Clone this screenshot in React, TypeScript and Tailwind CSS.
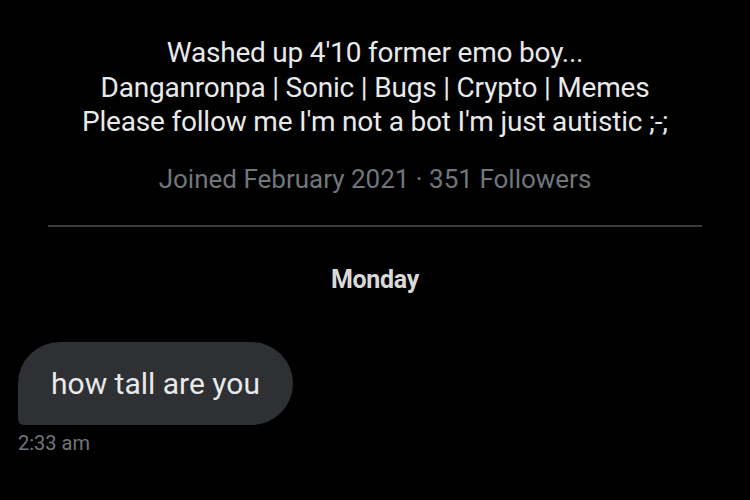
export default function App() {
  return (
    <div
      className="w-[750px] h-[500px] bg-black overflow-hidden flex flex-col"
      style={{ fontFamily: "Roboto, 'Noto Sans', sans-serif" }}
    >
      <div className="pt-[36px] text-center text-[28px] leading-[34.5px] text-[#e7e9ea] tracking-[-0.2px]">
        <p>Washed up 4'10 former emo boy...</p>
        <p>Danganronpa | Sonic | Bugs | Crypto | Memes</p>
        <p>Please follow me I'm not a bot I'm just autistic ;-;</p>
      </div>
      <p className="mt-[23px] text-center text-[26px] leading-[32px] text-[#71767b]">
        Joined February 2021 · 351 Followers
      </p>
      <div className="mx-[48px] mt-[30px] h-[2px] bg-[#3a3b3f]" />
      <p className="mt-[39px] text-center text-[25px] leading-[28px] font-bold text-[#d9d9d9] tracking-[-0.3px]">
        Monday
      </p>
      <div className="mt-[48px] px-[18px] flex flex-col items-start">
        <div className="h-[83px] flex items-center px-[33px] bg-[#2f3033] rounded-[42px] rounded-bl-[6px]">
          <span className="text-[30px] text-[#e7e9ea]">how tall are you</span>
        </div>
        <span className="mt-[6px] text-[20px] leading-[24px] text-[#71767b]">2:33 am</span>
      </div>
    </div>
  );
}
